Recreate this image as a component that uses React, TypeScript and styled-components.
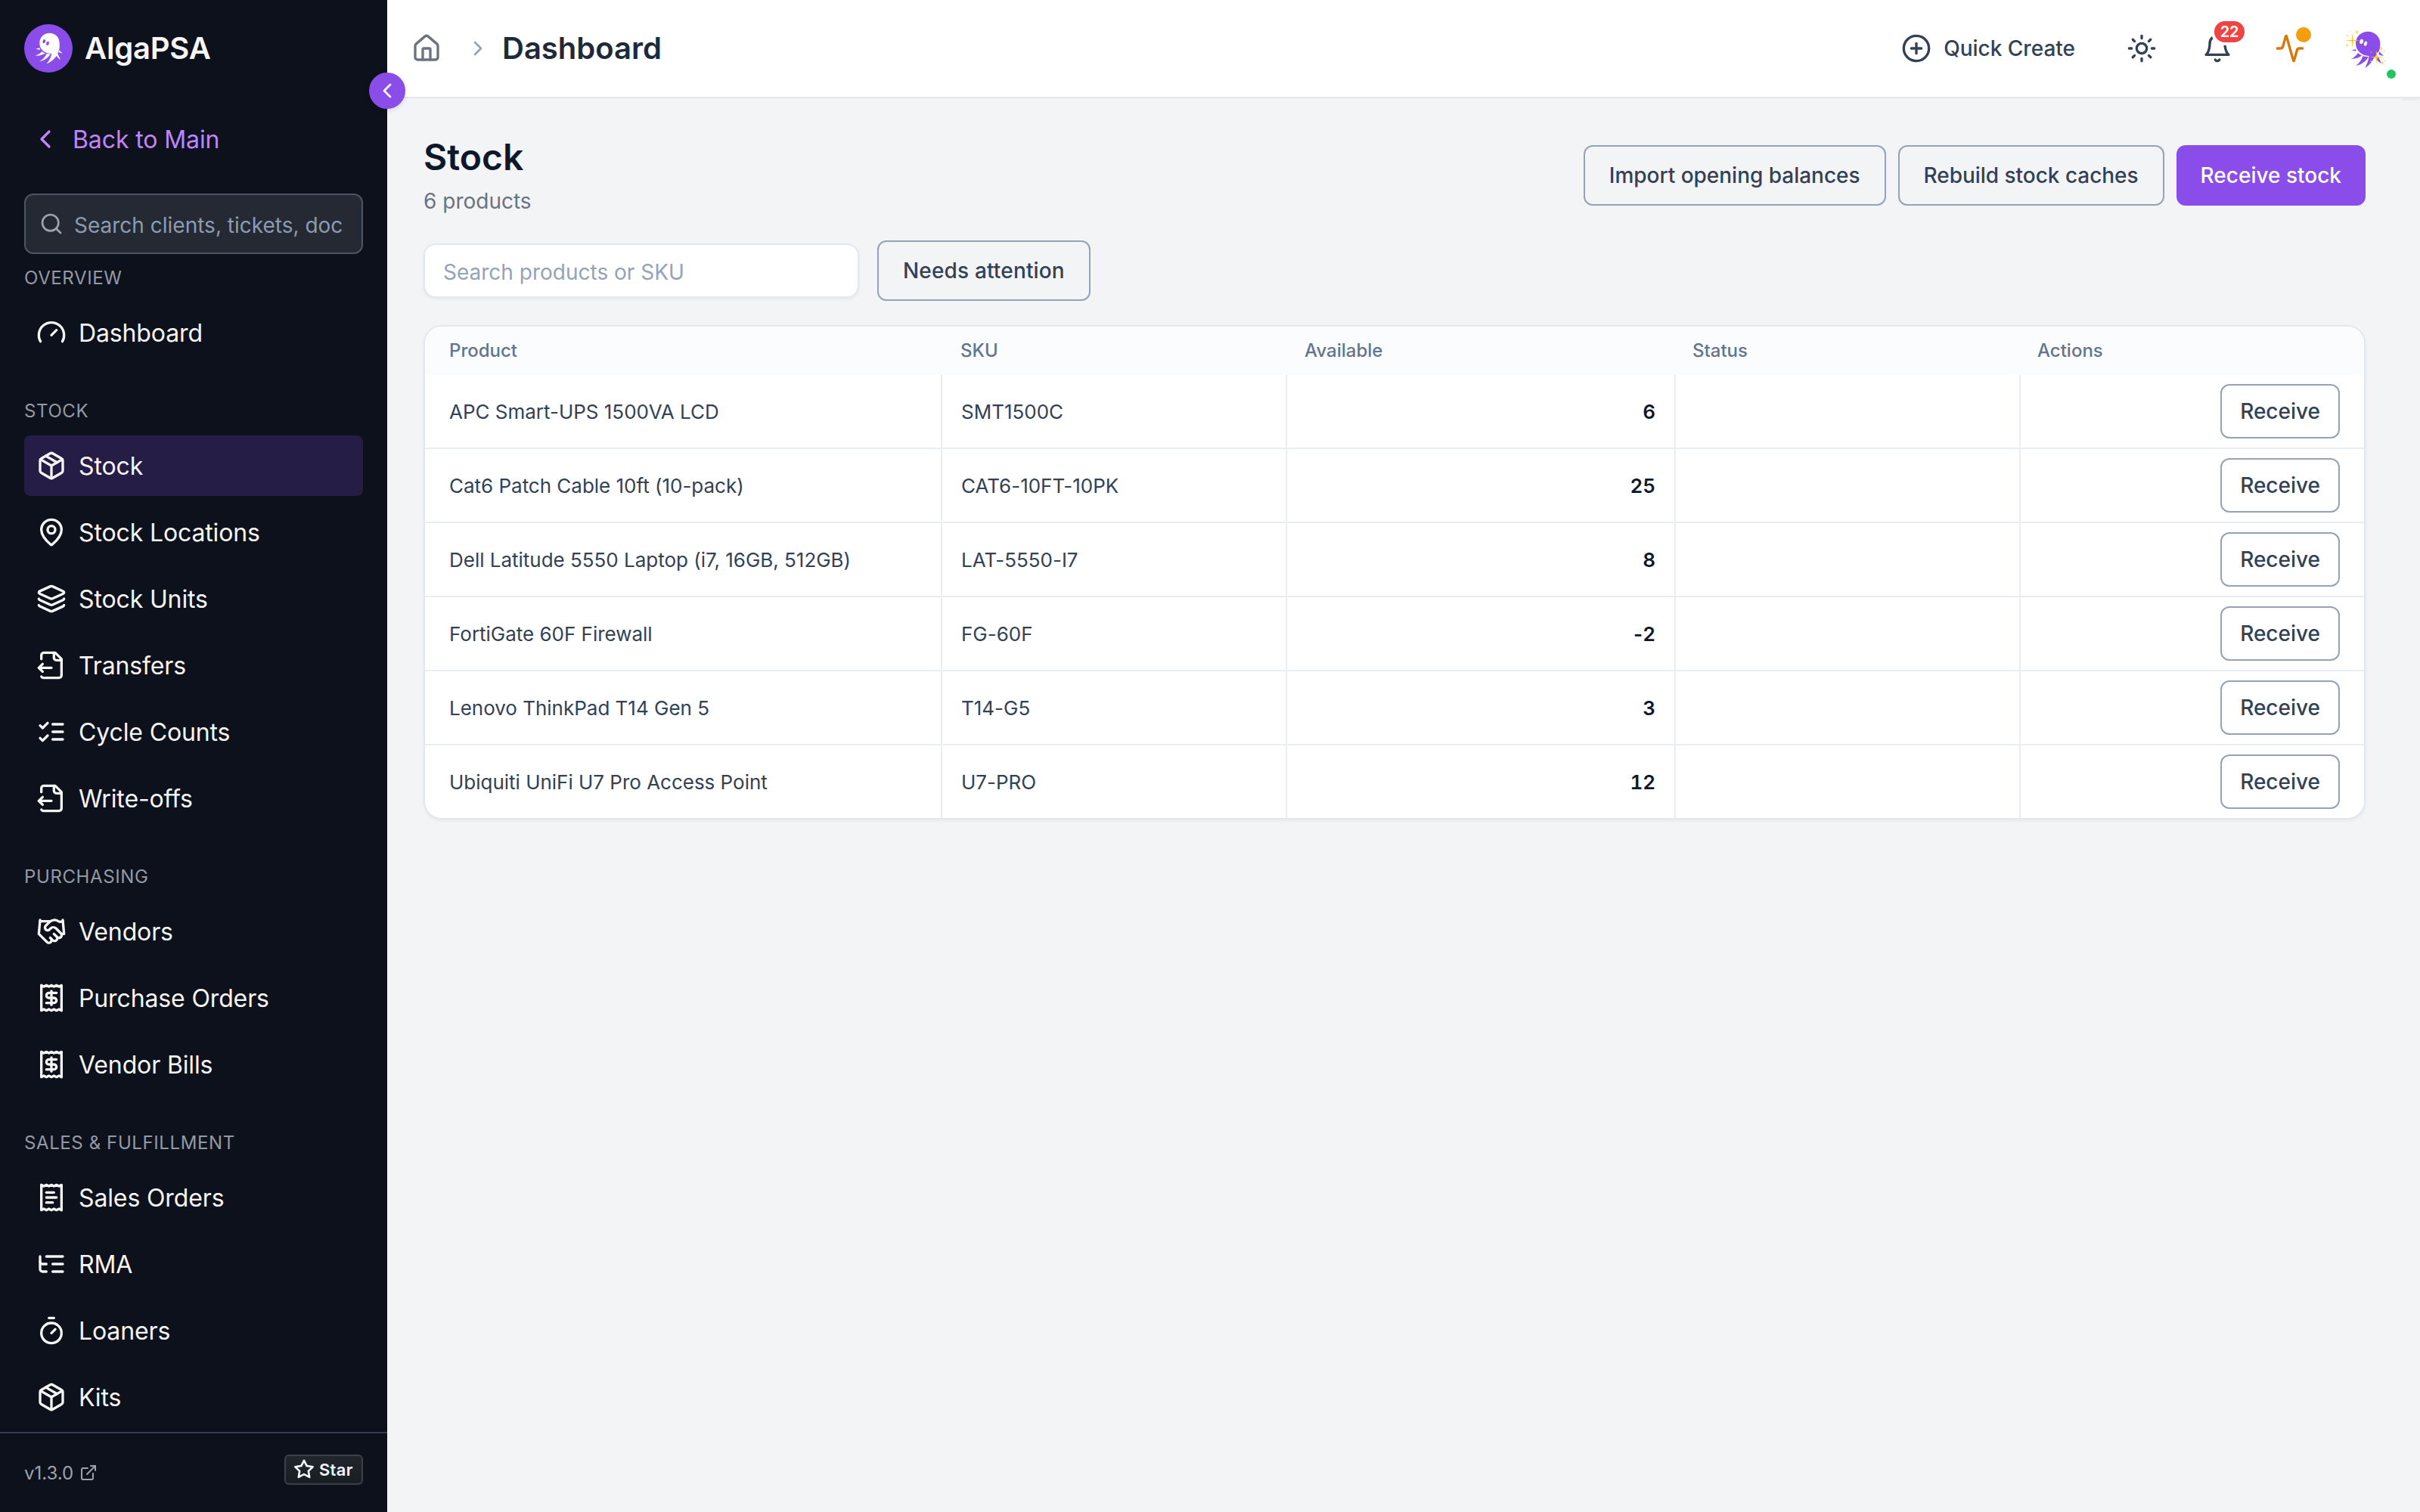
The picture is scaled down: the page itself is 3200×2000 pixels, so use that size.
import React from 'react';
import styled, { createGlobalStyle, css } from 'styled-components';
import {
  Gauge, Package, MapPin, Layers, Handshake, Timer, ChevronLeft, ChevronRight,
  Search, ExternalLink, House, CirclePlus, Sun, Activity,
} from 'lucide-react';

const GlobalStyle = createGlobalStyle`
  *, *::before, *::after { box-sizing: border-box; }
  body { margin: 0; background: #f2f4f6; }
  button, input { font: inherit; }
`;

const Shell = styled.div`
  display: flex;
  width: 3200px;
  height: 2000px;
  overflow: hidden;
  background: #f2f4f6;
  color: #334155;
  font-family: Inter, 'Liberation Sans', sans-serif;
  font-size: 28px;
`;

/* ---------- Sidebar ---------- */

const Sidebar = styled.aside`
  position: relative;
  z-index: 2;
  display: flex;
  flex-direction: column;
  flex: none;
  width: 512px;
  height: 100%;
  background: #0d111c;
  color: #f5f5f5;
`;

const Brand = styled.div`
  display: flex;
  align-items: center;
  gap: 16px;
  height: 128px;
  padding: 0 32px;
  font-size: 40px;
  font-weight: 600;
  line-height: 56px;
  letter-spacing: -0.2px;
`;

const CollapseButton = styled.button`
  position: absolute;
  top: 96px;
  right: -24px;
  display: flex;
  align-items: center;
  justify-content: center;
  width: 48px;
  height: 48px;
  padding: 0;
  border: 0;
  border-radius: 50%;
  background: #8a4dea;
  color: #fff;
  box-shadow: 0 2px 6px rgba(0, 0, 0, 0.12);
`;

const BackLink = styled.a`
  display: flex;
  align-items: center;
  gap: 16px;
  height: 80px;
  margin: 16px 32px 32px;
  padding: 0 8px;
  color: #c084fc;
  font-size: 32px;
  letter-spacing: -0.1px;
`;

const SideSearch = styled.label`
  display: flex;
  align-items: center;
  flex: none;
  gap: 14px;
  height: 80px;
  margin: 0 32px;
  padding: 0 18px;
  border: 2px solid #4b5563;
  border-radius: 12px;
  background: #252933;
  color: #9ca3af;

  span {
    padding-top: 3px;
    color: #8b9bb1;
    white-space: nowrap;
  }
`;

const Nav = styled.nav`
  display: flex;
  flex: 1;
  flex-direction: column;
  gap: 48px;
  min-height: 0;
  padding: 16px 32px 0;
  overflow: hidden;
`;

const SectionTitle = styled.h2`
  margin: 0 0 16px;
  color: #9399a5;
  font-size: 24px;
  font-weight: 400;
  line-height: 32px;
  letter-spacing: 0.6px;
`;

const NavList = styled.div`
  display: flex;
  flex-direction: column;
  gap: 8px;
`;

const NavItem = styled.a<{ $active?: boolean }>`
  display: flex;
  align-items: center;
  gap: 16px;
  height: 80px;
  padding: 0 16px;
  border-radius: 8px;
  background: ${(p) => (p.$active ? '#251d45' : 'transparent')};
  font-size: 32px;
  letter-spacing: -0.13px;
`;

const SideFooter = styled.div`
  display: flex;
  align-items: flex-start;
  justify-content: space-between;
  flex: none;
  height: 106px;
  padding: 28px 32px;
  border-top: 2px solid #343c4b;
`;

const Version = styled.span`
  display: flex;
  align-items: center;
  gap: 8px;
  height: 48px;
  color: #9ca3af;
  font-size: 24px;
`;

const StarButton = styled.button`
  display: flex;
  align-items: center;
  gap: 6px;
  width: 104px;
  height: 40px;
  padding: 0 0 0 10px;
  border: 2px solid #3b4047;
  border-radius: 6px;
  background: linear-gradient(#21262d, #191d23);
  color: #f0f6fc;
  font-size: 22px;
  font-weight: 600;
  letter-spacing: 0.3px;
`;

/* ---------- Top bar ---------- */

const Main = styled.div`
  display: flex;
  flex: 1;
  flex-direction: column;
  min-width: 0;
`;

const TopBar = styled.header`
  display: flex;
  align-items: center;
  justify-content: space-between;
  flex: none;
  height: 130px;
  padding: 0 32px;
  border-bottom: 2px solid #e2e8f0;
  background: #fff;
  box-shadow: 0 2px 4px rgba(0, 0, 0, 0.05);
`;

const Crumbs = styled.div`
  display: flex;
  align-items: center;
  color: #6b7280;

  .sep {
    margin: 0 16px 0 32px;
    color: #94a3b8;
  }
`;

const CrumbTitle = styled.h1`
  margin: 0;
  color: #1e293b;
  font-size: 40px;
  font-weight: 600;
  line-height: 56px;
`;

const Tools = styled.div`
  display: flex;
  align-items: center;
  color: #334155;
`;

const QuickCreate = styled.button`
  display: flex;
  align-items: center;
  gap: 16px;
  margin-right: 68px;
  padding: 0;
  border: 0;
  background: none;
  color: inherit;
  font-weight: 500;
`;

const IconSlot = styled.span<{ $gap: number }>`
  position: relative;
  display: flex;
  margin-right: ${(p) => p.$gap}px;
`;

const CountBadge = styled.span`
  position: absolute;
  top: -16px;
  left: 16px;
  display: flex;
  align-items: center;
  justify-content: center;
  width: 40px;
  height: 28px;
  border-radius: 14px;
  background: #ef4444;
  box-shadow: 0 0 0 4px #fff;
  color: #fff;
  font-size: 20px;
  font-weight: 600;
  letter-spacing: -0.2px;
`;

const Dot = styled.span<{ $size: number; $color: string; $top: number; $left: number }>`
  position: absolute;
  top: ${(p) => p.$top}px;
  left: ${(p) => p.$left}px;
  width: ${(p) => p.$size}px;
  height: ${(p) => p.$size}px;
  border-radius: 50%;
  background: ${(p) => p.$color};
`;

/* ---------- Page ---------- */

const Page = styled.main`
  display: flex;
  flex: 1;
  flex-direction: column;
  margin-right: 24px;
  padding: 48px 48px 0;
  background: #f2f4f6;
`;

const PageHead = styled.div`
  display: flex;
  align-items: center;
  justify-content: space-between;
  height: 108px;
`;

const Title = styled.h2`
  margin: 0;
  color: #0f172a;
  font-size: 48px;
  font-weight: 600;
  line-height: 60px;
`;

const Subtitle = styled.p`
  margin: 8px 0 0;
  color: #6b7280;
  line-height: 40px;
`;

const ButtonRow = styled.div`
  display: flex;
  gap: 16px;
`;

const Button = styled.button<{ $primary?: boolean; $small?: boolean; $tracking?: number }>`
  display: flex;
  align-items: center;
  height: ${(p) => (p.$small ? 72 : 80)}px;
  padding: 0 ${(p) => (p.$small ? 24 : 32)}px;
  border: 2px solid #94a3b8;
  border-radius: 12px;
  background: transparent;
  color: #334155;
  font-size: 28px;
  font-weight: 500;
  letter-spacing: ${(p) => p.$tracking ?? 0}px;
  white-space: nowrap;
  ${(p) =>
    p.$primary &&
    css`
      border: 0;
      background: #8a4dea;
      color: #fff;
    `}
`;

const Filters = styled.div`
  display: flex;
  align-items: center;
  gap: 24px;
  height: 80px;
  margin: 32px 0;
`;

const SearchInput = styled.input`
  width: 576px;
  height: 72px;
  padding: 3px 24px 0;
  border: 2px solid #e2e8f0;
  border-radius: 16px;
  background: #fff;
  box-shadow: 0 2px 4px rgba(0, 0, 0, 0.05);
  color: #0f172a;

  &::placeholder {
    color: #94a3b8;
    opacity: 1;
  }
`;

const Card = styled.section`
  overflow: hidden;
  border: 2px solid #e2e8f0;
  border-radius: 24px;
  background: #fff;
  box-shadow: 0 2px 4px rgba(0, 0, 0, 0.05);
`;

const HeadRow = styled.div`
  display: grid;
  grid-template-columns: 684px 455px 513px 456px 1fr;
  align-items: center;
  height: 64px;
  padding-bottom: 2px;
  background: #fbfcfe;
  color: #64748b;
  font-size: 24px;
  font-weight: 500;

  span {
    padding-left: 24px;
  }
  span:first-child {
    padding-left: 32px;
  }
`;

const Row = styled.div`
  display: grid;
  grid-template-columns: 682px 456px 514px 456px 1fr;
  height: 98px;
  border-bottom: 2px solid #eaedf2;
  font-size: 26px;
  letter-spacing: -0.015px;

  &:last-child {
    height: 96px;
    border-bottom: 0;
  }
`;

const Cell = styled.div<{ $end?: boolean }>`
  display: flex;
  align-items: center;
  justify-content: ${(p) => (p.$end ? 'flex-end' : 'flex-start')};
  padding: 0 25px;
  border-left: 2px solid #eaedf2;

  &:first-child {
    padding-left: 32px;
    border-left: 0;
  }
  &:last-child {
    padding-right: 32px;
  }
`;

const Quantity = styled.span`
  color: #0f172a;
  font-weight: 600;
`;

const Digits = styled.span`
  font-variant-numeric: tabular-nums;
`;

/* ---------- Drawings ---------- */

const Stroke = ({ children, size = 40 }: { children: React.ReactNode; size?: number }) => (
  <svg width={size} height={size} viewBox="0 0 24 24" fill="none" stroke="currentColor"
    strokeWidth="2" strokeLinecap="round" strokeLinejoin="round">
    {children}
  </svg>
);

const receiptEdge = 'M4 2v20l2-1 2 1 2-1 2 1 2-1 2 1 2-1 2 1V2l-2 1-2-1-2 1-2-1-2 1-2-1-2 1Z';

const ReceiptDollar = () => (
  <Stroke>
    <path d={receiptEdge} />
    <path d="M16 8h-6a2 2 0 1 0 0 4h4a2 2 0 1 1 0 4H8" />
    <path d="M12 17.5v-11" />
  </Stroke>
);

const ReceiptLines = () => (
  <Stroke>
    <path d={receiptEdge} />
    <path d="M14 8H8" />
    <path d="M16 12H8" />
    <path d="M13 16H8" />
  </Stroke>
);

const FileOut = () => (
  <Stroke>
    <path d="M14 2v4a2 2 0 0 0 2 2h4" />
    <path d="M4 7V4a2 2 0 0 1 2-2 2 2 0 0 0-2 2" />
    <path d="M4.063 20.999a2 2 0 0 0 2 1L18 22a2 2 0 0 0 2-2V7l-5-5H6" />
    <path d="m5 11-3 3" />
    <path d="m5 17-3-3h10" />
  </Stroke>
);

const Checklist = () => (
  <Stroke>
    <path d="m3 17 2 2 4-4" />
    <path d="m3 7 2 2 4-4" />
    <path d="M13 6h8" />
    <path d="M13 12h8" />
    <path d="M13 18h8" />
  </Stroke>
);

const Tree = () => (
  <Stroke>
    <path d="M21 12h-8" />
    <path d="M21 6H8" />
    <path d="M21 18h-8" />
    <path d="M3 6v4c0 1.1.9 2 2 2h3" />
    <path d="M3 10v6c0 1.1.9 2 2 2h3" />
  </Stroke>
);

const BellIcon = () => (
  <Stroke>
    <path d="M6 8a6 6 0 0 1 12 0c0 7 3 9 3 9H3s3-2 3-9" />
    <path d="M10.3 21a1.94 1.94 0 0 0 3.4 0" />
  </Stroke>
);

const StarIcon = () => (
  <svg width="28" height="28" viewBox="0 0 16 16" fill="currentColor">
    <path d="M8 .25a.75.75 0 0 1 .673.418l1.882 3.815 4.21.612a.75.75 0 0 1 .416 1.279l-3.046 2.97.719 4.192a.751.751 0 0 1-1.088.791L8 12.347l-3.766 1.98a.75.75 0 0 1-1.088-.79l.72-4.194L.818 6.374a.75.75 0 0 1 .416-1.28l4.21-.611L7.327.668A.75.75 0 0 1 8 .25Zm0 2.445L6.615 5.5a.75.75 0 0 1-.564.41l-3.097.45 2.24 2.184a.75.75 0 0 1 .216.664l-.528 3.084 2.769-1.456a.75.75 0 0 1 .698 0l2.77 1.456-.53-3.084a.75.75 0 0 1 .216-.664l2.24-2.183-3.096-.45a.75.75 0 0 1-.564-.41L8 2.694Z" />
  </svg>
);

const Logo = () => (
  <svg width="64" height="64" viewBox="18 18 192 192">
    <circle cx="114" cy="114" r="96" fill="#8a4dea" />
    <g fill="#fff">
      <path d="M118 53C140 53 157 68 158 92C159 108 158 116 155 124C149 146 132 166 107 175C116 164 124 152 127 134C117 135 108 133 100 128C86 121 79 107 79 92C79 70 96 53 118 53Z" />
      <path d="M107 135C113 136 118 137 123 136C114 151 98 162 79 166C92 158 101 148 107 135Z" />
      <path d="M89 126C93 130 97 132 102 133C91 140 77 144 62 143C73 139 82 134 89 126Z" />
      <path d="M79 111C79 114 80 116 82 119C76 120 70 119 64 115C70 115 75 114 79 111Z" />
      <path d="M151 135C155 144 159 152 162 159C154 155 148 148 145 142Z" />
      <path d="M157 121C162 127 166 130 170 133C164 133 159 131 155 129Z" />
    </g>
    <ellipse cx="97" cy="86" rx="5.5" ry="8" transform="rotate(18 97 86)" fill="#8a4dea" />
    <ellipse cx="111" cy="94" rx="5.5" ry="8" transform="rotate(18 111 94)" fill="#8a4dea" />
  </svg>
);

// Four-pointed star: long thin arms around a narrow waist.
const sparkle = (x: number, y: number, r: number) => {
  const k = Math.max(r * 0.09, 1.6);
  return `M${x} ${y - r}L${x + k} ${y - k}L${x + r} ${y}L${x + k} ${y + k}L${x} ${y + r}L${x - k} ${y + k}L${x - r} ${y}L${x - k} ${y - k}Z`;
};

const Avatar = () => (
  <svg width="64" height="64" viewBox="48 36 192 192">
    <g fill="#8a4dea">
      <path d="M141 65C169 65 190 86 190 112C190 130 189 140 180 150C172 145 160 156 168 164C160 183 147 199 130 210C137 196 144 180 146 162C115 162 93 140 93 112C93 86 114 65 141 65Z" />
      <path d="M150 150H178L168 170H150Z" />
      <path d="M121 163C130 165 137 166 144 165C134 184 115 197 93 201C107 192 115 180 121 163Z" />
      <path d="M102 150C107 155 112 158 118 160C107 169 92 174 75 174C87 168 95 161 102 150Z" />
      <path d="M91 135C93 138 94 140 96 142C89 143 83 142 77 139C83 138 87 137 91 135Z" />
      <path d="M182 164C187 175 192 184 196 192C186 188 178 181 174 172Z" />
      <path d="M188 144C194 153 199 158 204 161C197 162 190 159 184 156Z" />
    </g>
    <ellipse cx="116" cy="105" rx="7" ry="9.5" transform="rotate(18 116 105)" fill="#fff" />
    <ellipse cx="132" cy="113" rx="6" ry="9.5" transform="rotate(18 132 113)" fill="#fff" />
    <g fill="#fcc81c">
      <path d={sparkle(80, 101, 30)} />
      <path d={sparkle(176, 167, 28)} />
      <path d={sparkle(97, 67, 9)} />
      <path d={sparkle(193, 132, 9)} />
      <path d={sparkle(59, 119, 7)} />
      <path d={sparkle(59, 82, 6)} opacity="0.6" />
      <path d={sparkle(154, 184, 7)} />
      <path d={sparkle(199, 190, 7)} />
      <path d={sparkle(154, 147, 6)} opacity="0.5" />
      <path d={sparkle(209, 182, 5)} opacity="0.6" />
      <path d={sparkle(205, 144, 6)} opacity="0.5" />
    </g>
  </svg>
);

/* ---------- Data ---------- */

const icon = { size: 40, strokeWidth: 2 };

const sections = [
  { title: 'OVERVIEW', items: [{ label: 'Dashboard', icon: <Gauge {...icon} /> }] },
  {
    title: 'STOCK',
    items: [
      { label: 'Stock', icon: <Package {...icon} />, active: true },
      { label: 'Stock Locations', icon: <MapPin {...icon} /> },
      { label: 'Stock Units', icon: <Layers {...icon} /> },
      { label: 'Transfers', icon: <FileOut /> },
      { label: 'Cycle Counts', icon: <Checklist /> },
      { label: 'Write-offs', icon: <FileOut /> },
    ],
  },
  {
    title: 'PURCHASING',
    items: [
      { label: 'Vendors', icon: <Handshake {...icon} /> },
      { label: 'Purchase Orders', icon: <ReceiptDollar /> },
      { label: 'Vendor Bills', icon: <ReceiptDollar /> },
    ],
  },
  {
    title: 'SALES & FULFILLMENT',
    items: [
      { label: 'Sales Orders', icon: <ReceiptLines /> },
      { label: 'RMA', icon: <Tree /> },
      { label: 'Loaners', icon: <Timer {...icon} /> },
      { label: 'Kits', icon: <Package {...icon} /> },
    ],
  },
] as { title: string; items: { label: string; icon: React.ReactNode; active?: boolean }[] }[];

const products = [
  { name: 'APC Smart-UPS 1500VA LCD', sku: 'SMT1500C', available: 6 },
  { name: 'Cat6 Patch Cable 10ft (10-pack)', sku: 'CAT6-10FT-10PK', available: 25 },
  { name: 'Dell Latitude 5550 Laptop (i7, 16GB, 512GB)', sku: 'LAT-5550-I7', available: 8 },
  { name: 'FortiGate 60F Firewall', sku: 'FG-60F', available: -2 },
  { name: 'Lenovo ThinkPad T14 Gen 5', sku: 'T14-G5', available: 3 },
  { name: 'Ubiquiti UniFi U7 Pro Access Point', sku: 'U7-PRO', available: 12 },
];

export default function App() {
  return (
    <>
      <GlobalStyle />
      <Shell>
        <Sidebar>
          <Brand>
            <Logo />
            AlgaPSA
          </Brand>
          <CollapseButton aria-label="Collapse sidebar">
            <ChevronLeft size={32} />
          </CollapseButton>
          <BackLink>
            <ChevronLeft size={40} />
            Back to Main
          </BackLink>
          <SideSearch>
            <Search size={32} />
            <span>Search clients, tickets, doc</span>
          </SideSearch>
          <Nav>
            {sections.map((section) => (
              <div key={section.title}>
                <SectionTitle>{section.title}</SectionTitle>
                <NavList>
                  {section.items.map((item) => (
                    <NavItem key={item.label} $active={item.active}>
                      {item.icon}
                      {item.label}
                    </NavItem>
                  ))}
                </NavList>
              </div>
            ))}
          </Nav>
          <SideFooter>
            <Version>
              v1.3.0
              <ExternalLink size={24} />
            </Version>
            <StarButton>
              <StarIcon />
              Star
            </StarButton>
          </SideFooter>
        </Sidebar>
        <Main>
          <TopBar>
            <Crumbs>
              <House size={40} />
              <ChevronRight size={32} className="sep" />
              <CrumbTitle>Dashboard</CrumbTitle>
            </Crumbs>
            <Tools>
              <QuickCreate>
                <CirclePlus size={40} />
                Quick Create
              </QuickCreate>
              <IconSlot $gap={60}>
                <Sun size={40} />
              </IconSlot>
              <IconSlot $gap={56}>
                <BellIcon />
                <CountBadge>22</CountBadge>
              </IconSlot>
              <IconSlot $gap={52}>
                <Activity size={40} color="#d97706" />
                <Dot $size={20} $color="#f59e0b" $top={-8} $left={28} />
              </IconSlot>
              <IconSlot $gap={4}>
                <Avatar />
                <Dot $size={12} $color="#22c55e" $top={60} $left={56} />
              </IconSlot>
            </Tools>
          </TopBar>
          <Page>
            <PageHead>
              <div>
                <Title>Stock</Title>
                <Subtitle>6 products</Subtitle>
              </div>
              <ButtonRow>
                <Button $tracking={-0.02}>Import opening balances</Button>
                <Button $tracking={-0.03}>Rebuild stock caches</Button>
                <Button $primary>Receive stock</Button>
              </ButtonRow>
            </PageHead>
            <Filters>
              <SearchInput placeholder="Search products or SKU" />
              <Button $tracking={0.16}>Needs attention</Button>
            </Filters>
            <Card>
              <HeadRow>
                <span>Product</span>
                <span>SKU</span>
                <span>Available</span>
                <span>Status</span>
                <span>Actions</span>
              </HeadRow>
              {products.map((product) => (
                <Row key={product.sku}>
                  <Cell>{product.name}</Cell>
                  <Cell>{product.sku}</Cell>
                  <Cell $end>
                    <Quantity>
                      {product.available < 0 && '-'}
                      <Digits>{Math.abs(product.available)}</Digits>
                    </Quantity>
                  </Cell>
                  <Cell />
                  <Cell $end>
                    <Button $small>Receive</Button>
                  </Cell>
                </Row>
              ))}
            </Card>
          </Page>
        </Main>
      </Shell>
    </>
  );
}
